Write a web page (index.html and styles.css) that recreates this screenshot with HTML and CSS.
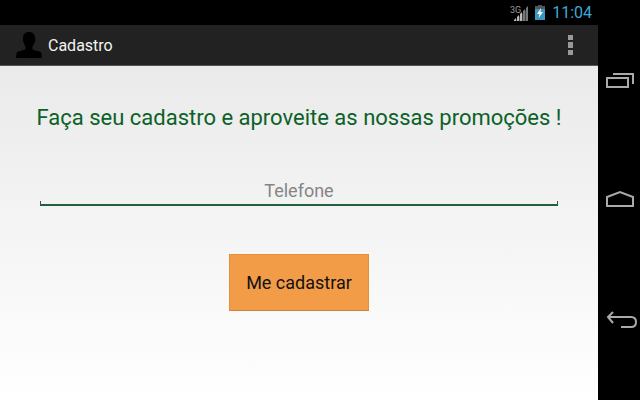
FILE: index.html
```html
<!DOCTYPE html>
<html lang="pt-BR">
<head>
    <meta charset="UTF-8">
    <meta name="viewport" content="width=device-width, initial-scale=1.0">
    <title>Cadastro</title>
    <link rel="stylesheet" href="styles.css">
</head>
<body>
    <div class="screen">
        <div class="status-bar">
            <svg class="signal" width="18" height="16" viewBox="0 0 18 16" role="img" aria-label="Sinal 3G">
                <path fill="#444" d="M18 3v13H5z"/>
                <path fill="#bbb" d="M4 16v-1l2-2v3zM7 16v-4l2-2v6zM10 16V9l2-2v9z"/>
                <path fill="#777" d="M13 16V6l2-2v12zM16 16V3l2-2v15z"/>
                <text class="signal-text" x="0" y="8">3G</text>
            </svg>
            <svg class="battery" width="10" height="15" viewBox="0 0 10 15" role="img" aria-label="Bateria carregando">
                <path fill="#555" d="M3 0h4v1h3v4H0V1h3z"/>
                <path fill="#3a97bd" d="M0 4h10v11H0z"/>
                <path fill="#fff" d="M6 3L2 9h2.500l-1 4L8 7H5.500z"/>
            </svg>
            <span class="clock">11:04</span>
        </div>
        <header class="action-bar">
            <svg class="app-icon" width="26" height="26" viewBox="0 0 26 26" aria-hidden="true">
                <path d="M13 0c4 0 6 2.500 6 6 0 1 .5 1.500.3 3-.2 1-.8 1.300-1 2-.4 1.500-1 2.500-1.800 3.500V17c1 2 8 1.500 9 4l.5 5H0l.5-5c1-2.500 8-2 9-4v-2.500C8.700 13.500 8.200 12.500 8 11c-.3-.7-.8-1-1-2C6.800 7.500 7 7 7 6c0-3.500 2-6 6-6z"/>
            </svg>
            <h1 class="app-title">Cadastro</h1>
            <button type="button" class="menu-btn" aria-label="Mais opções">
                <svg width="5" height="20" viewBox="0 0 5 20">
                    <path fill="#999" d="M0 0h5v5H0zM0 7h5v6H0zM0 15h5v5H0z"/>
                </svg>
            </button>
        </header>
        <main class="content">
            <p class="message">Faça seu cadastro e aproveite as nossas promoções !</p>
            <form class="register-form">
                <div class="field">
                    <input type="tel" id="telefone" placeholder="Telefone" aria-label="Telefone">
                </div>
                <button type="submit" class="register-btn">Me cadastrar</button>
            </form>
        </main>
    </div>
    <nav class="nav-bar">
        <button type="button" class="nav-btn" aria-label="Aplicativos recentes">
            <svg width="34" height="20" viewBox="0 0 34 20">
                <path d="M3 8h21v9H3zM9 4h20v10"/>
            </svg>
        </button>
        <button type="button" class="nav-btn" aria-label="Início">
            <svg width="34" height="20" viewBox="0 0 34 20">
                <path d="M3 16V7l13-5 13 5v9z"/>
            </svg>
        </button>
        <button type="button" class="nav-btn" aria-label="Voltar">
            <svg width="34" height="20" viewBox="0 0 34 20">
                <path d="M9 2L4 7l5 6M4 7h23c3 0 5 2 5 5s-2 5-5 5H17"/>
            </svg>
        </button>
    </nav>
</body>
</html>
```

FILE: styles.css
```css
* {
    margin: 0;
    padding: 0;
    box-sizing: border-box;
}

body {
    font-family: Roboto, sans-serif;
    background: #000;
    min-height: 100vh;
    display: flex;
}

button {
    font-family: inherit;
    background: none;
    border: none;
    cursor: pointer;
}

.screen {
    flex: 1;
    display: flex;
    flex-direction: column;
}

.status-bar {
    height: 25px;
    padding-right: 6px;
    display: flex;
    align-items: center;
    justify-content: flex-end;
    gap: 7px;
}

.signal-text {
    font-size: 9px;
    fill: #999;
}

.clock {
    font-size: 16px;
    line-height: 24px;
    color: #3fa9d6;
}

.action-bar {
    height: 41px;
    padding: 0 16px;
    background: #222;
    border-bottom: 1px solid #555;
    display: flex;
    align-items: center;
}

.app-title {
    flex: 1;
    margin-left: 6px;
    font-size: 16px;
    font-weight: 400;
    text-align: left;
    color: #f3f3f3;
}

.menu-btn {
    width: 24px;
    height: 40px;
    display: flex;
    align-items: center;
    justify-content: center;
}

.content {
    flex: 1;
    padding: 36px 36px 0;
    background: linear-gradient(#eaeaea, #fff);
    text-align: center;
}

.message {
    font-size: 22px;
    line-height: 32px;
    color: #0b6127;
}

.register-form {
    margin-top: 40px;
    padding: 0 4px;
    display: flex;
    flex-direction: column;
    align-items: center;
    gap: 48px;
}

.field {
    position: relative;
    width: 100%;
}

.field input {
    display: block;
    width: 100%;
    height: 32px;
    padding-top: 2px;
    font-family: inherit;
    font-size: 18px;
    text-align: center;
    color: #222;
    background: none;
    border: none;
    border-bottom: 2px solid #22603f;
    outline: none;
}

.field input::placeholder {
    color: #858585;
}

/* pontas da linha do campo */
.field::before,
.field::after {
    content: "";
    position: absolute;
    bottom: 0;
    width: 1px;
    height: 5px;
    background: #22603f;
}

.field::before {
    left: 0;
}

.field::after {
    right: 0;
}

.register-btn {
    height: 57px;
    padding: 0 16px;
    font-size: 18px;
    color: #111;
    background: #f39c47;
    border: 1px solid #e58f3c;
    border-bottom: 1px solid #c98240;
}

.nav-bar {
    flex: 0 0 42px;
    padding: 20px 0;
    display: flex;
    flex-direction: column;
}

.nav-btn {
    flex: 1;
    display: flex;
    align-items: center;
    justify-content: flex-end;
    padding-right: 2px;
}

.nav-btn svg {
    fill: none;
    stroke: #aaa;
    stroke-width: 2;
}
```
